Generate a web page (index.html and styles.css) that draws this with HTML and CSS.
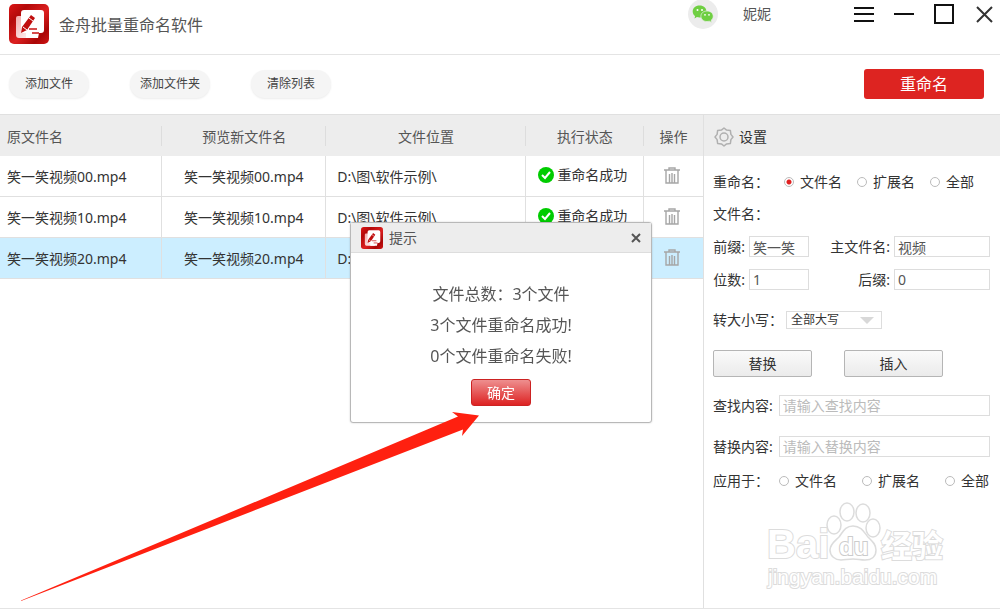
FILE: index.html
```html
<!DOCTYPE html>
<html lang="zh-Hans">
<head>
  <meta charset="UTF-8" />
  <meta name="viewport" content="width=device-width,initial-scale=1" />
  <title>金舟批量重命名软件</title>
  <link rel="stylesheet" href="styles.css">
</head>
<body>

  <!-- 共用图标 -->
  <svg class="sprite" width="0" height="0" aria-hidden="true">
    <defs>
      <linearGradient id="logoRed" x1="0" y1="0" x2="1" y2="1">
        <stop offset="0" stop-color="#dc1616"/>
        <stop offset=".25" stop-color="#b40a0a"/>
        <stop offset=".55" stop-color="#dc2020"/>
        <stop offset=".8" stop-color="#a90606"/>
        <stop offset="1" stop-color="#d01414"/>
      </linearGradient>
      <linearGradient id="paper" x1="0" y1="0" x2="1" y2="1">
        <stop offset="0" stop-color="#f3a9a9"/>
        <stop offset="1" stop-color="#fff"/>
      </linearGradient>
    </defs>
    <symbol id="logo" viewBox="0 0 40 40">
      <rect width="40" height="40" rx="5" fill="url(#logoRed)"/>
      <path d="M9 12h16v22H10a3 3 0 0 1-3-3V14a2 2 0 0 1 2-2z" fill="url(#paper)"/>
      <path d="M15 6h17a3 3 0 0 1 3 3v17a3 3 0 0 1-3 3h-2l-1 5H17V29h-5V9a3 3 0 0 1 3-3z" fill="#fff"/>
      <path d="M22 11l4 3-8 12-6 3 1-6z" fill="#c00d0d"/>
      <path d="M20 14l4 3M14 23l4 3" stroke="#fff" stroke-width="1"/>
      <path d="M20 25h8M23 29h7" stroke="#c91212" stroke-width="1.3"/>
    </symbol>
    <symbol id="ok" viewBox="0 0 16 16">
      <circle cx="8" cy="8" r="8" fill="#0c0"/>
      <path d="M4 8l3 3 5-6" fill="none" stroke="#fff" stroke-width="2"/>
    </symbol>
    <symbol id="trash" viewBox="0 0 16 17">
      <path d="M0 3h16M5 3V1h6v2M2 3v13h12V3M5.500 7v9M8 6v10M10.500 7v9" fill="none" stroke="#a6a6a6" stroke-width="1.400"/>
    </symbol>
  </svg>

  <div class="window">
    <header class="titlebar">
      <svg class="logo"><use href="#logo"/></svg>
      <h1>金舟批量重命名软件</h1>
      <div class="account">
        <svg class="avatar" viewBox="0 0 30 30">
          <circle cx="15" cy="15" r="15" fill="#ececec"/>
          <path d="M11.500 6.500c4.200 0 7 2.600 7 6s-2.800 6-7 6c-1 0-1.800-.1-2.600-.4L6.500 19.500l.6-2.400C5.500 16 4.700 14.400 4.700 12.500c0-3.400 2.800-6 6.800-6z" fill="#6fcf42"/>
          <path d="M19 12c3.600 0 6.200 2.300 6.200 5.200 0 1.600-.8 3-2 4l.4 2.200-2.200-1.200c-.8.200-1.600.3-2.400.3-3.500 0-6.100-2.300-6.100-5.300S15.500 12 19 12z" fill="#6fcf42" stroke="#ececec" stroke-width=".7"/>
          <g fill="#fff"><circle cx="9.500" cy="11" r="1"/><circle cx="14" cy="11" r="1"/><circle cx="17" cy="15.800" r=".9"/><circle cx="21" cy="15.800" r=".9"/></g>
        </svg>
        <span>妮妮</span>
      </div>
      <div class="win-buttons">
        <button type="button" aria-label="菜单"><svg viewBox="0 0 22 22"><path d="M1 5h20M1 11h20M1 18h20" stroke="#111" stroke-width="2"/></svg></button>
        <button type="button" aria-label="最小化"><svg viewBox="0 0 22 22"><path d="M1 11h20" stroke="#111" stroke-width="2"/></svg></button>
        <button type="button" aria-label="最大化"><svg viewBox="0 0 22 22"><rect x="2" y="2" width="18" height="18" fill="none" stroke="#111" stroke-width="2"/></svg></button>
        <button type="button" aria-label="关闭"><svg viewBox="0 0 22 22"><path d="M4 4l15 15M19 4L4 19" stroke="#333" stroke-width="2"/></svg></button>
      </div>
    </header>

    <div class="toolbar">
      <button type="button" class="pill">添加文件</button>
      <button type="button" class="pill">添加文件夹</button>
      <button type="button" class="pill">清除列表</button>
      <button type="button" class="rename">重命名</button>
    </div>

    <div class="content">
      <main class="files">
        <table>
          <colgroup>
            <col class="c-name"><col class="c-new"><col class="c-path"><col class="c-state"><col class="c-op">
          </colgroup>
          <thead>
            <tr><th>原文件名</th><th>预览新文件名</th><th>文件位置</th><th>执行状态</th><th>操作</th></tr>
          </thead>
          <tbody>
            <tr>
              <td>笑一笑视频00.mp4</td><td>笑一笑视频00.mp4</td><td>D:\图\软件示例\</td>
              <td><span class="state"><svg><use href="#ok"/></svg>重命名成功</span></td>
              <td><button type="button" class="del" aria-label="删除"><svg><use href="#trash"/></svg></button></td>
            </tr>
            <tr>
              <td>笑一笑视频10.mp4</td><td>笑一笑视频10.mp4</td><td>D:\图\软件示例\</td>
              <td><span class="state"><svg><use href="#ok"/></svg>重命名成功</span></td>
              <td><button type="button" class="del" aria-label="删除"><svg><use href="#trash"/></svg></button></td>
            </tr>
            <tr class="selected">
              <td>笑一笑视频20.mp4</td><td>笑一笑视频20.mp4</td><td>D:\图\软件示例\</td>
              <td><span class="state"><svg><use href="#ok"/></svg>重命名成功</span></td>
              <td><button type="button" class="del" aria-label="删除"><svg><use href="#trash"/></svg></button></td>
            </tr>
          </tbody>
        </table>
      </main>

      <aside class="settings">
        <h2>
          <svg viewBox="0 0 20 20" fill="none" stroke="#b0b0b0" stroke-width="1.500">
            <path d="M10 1l2.600 2.100 3.800.5.500 3.800L19 10l-2.100 2.600-.5 3.800-3.800.5L10 19l-2.600-2.100-3.800-.5-.5-3.800L1 10l2.100-2.600.5-3.800 3.800-.5z" stroke-linejoin="round"/>
            <circle cx="10" cy="10" r="4"/>
          </svg>
          设置
        </h2>
        <form>
          <div class="row radios" role="radiogroup" aria-labelledby="renameLabel">
            <span id="renameLabel">重命名：</span>
            <label><input type="radio" name="target" checked>文件名</label>
            <label><input type="radio" name="target">扩展名</label>
            <label><input type="radio" name="target">全部</label>
          </div>
          <div class="row">文件名：</div>
          <div class="row fields">
            <label for="prefix">前缀:</label>
            <input type="text" id="prefix" value="笑一笑">
            <label for="mainName">主文件名:</label>
            <input type="text" id="mainName" value="视频">
          </div>
          <div class="row fields">
            <label for="digits">位数:</label>
            <input type="text" id="digits" value="1">
            <label for="suffix">后缀:</label>
            <input type="text" id="suffix" value="0">
          </div>
          <div class="row case">
            <label for="letterCase">转大小写：</label>
            <span class="select">
              <select id="letterCase"><option>全部大写</option><option>全部小写</option></select>
            </span>
          </div>
          <div class="row actions">
            <button type="button">替换</button>
            <button type="button">插入</button>
          </div>
          <div class="row search">
            <label for="find">查找内容:</label>
            <input type="text" id="find" placeholder="请输入查找内容">
          </div>
          <div class="row search">
            <label for="replace">替换内容:</label>
            <input type="text" id="replace" placeholder="请输入替换内容">
          </div>
          <div class="row radios wide" role="radiogroup" aria-labelledby="applyLabel">
            <span id="applyLabel">应用于：</span>
            <label><input type="radio" name="apply">文件名</label>
            <label><input type="radio" name="apply">扩展名</label>
            <label><input type="radio" name="apply">全部</label>
          </div>
        </form>
        <svg class="watermark" viewBox="0 0 184 92">
          <g fill="#fff" stroke="#dcdcdc" stroke-width="1.500">
            <text class="wm-latin" x="2" y="57">Bai</text>
            <ellipse cx="69" cy="24" rx="7" ry="9"/>
            <ellipse cx="82" cy="11" rx="7" ry="9"/>
            <ellipse cx="98" cy="12" rx="7" ry="9"/>
            <ellipse cx="108" cy="27" rx="7" ry="9"/>
            <path d="M88 25c8 0 11 6 15 11 4 4 8 7 8 13 0 7-5 10-11 10-5 0-7-1-12-1s-8 1-12 1c-6 0-11-4-11-10 0-6 5-9 9-13 4-5 6-11 14-11z"/>
            <text class="wm-du" x="74" y="54">du</text>
            <text class="wm-cjk" x="116" y="56">经验</text>
          </g>
          <text class="wm-url" x="3" y="83">jingyan.baidu.com</text>
        </svg>
      </aside>
    </div>
  </div>

  <div class="overlay">
    <section class="dialog" role="dialog" aria-labelledby="dialogTitle">
      <div class="dialog-head">
        <svg class="dialog-logo"><use href="#logo"/></svg>
        <h3 id="dialogTitle">提示</h3>
        <button type="button" class="dialog-close" aria-label="关闭"><svg viewBox="0 0 10 10"><path d="M1 1l8 8M9 1L1 9" stroke="#555" stroke-width="2"/></svg></button>
      </div>
      <div class="dialog-body">
        <p>文件总数：3个文件</p>
        <p>3个文件重命名成功!</p>
        <p>0个文件重命名失败!</p>
        <button type="button" class="confirm">确定</button>
      </div>
    </section>
  </div>

  <svg class="arrow" viewBox="0 0 1000 609" aria-hidden="true">
    <path d="M21 600.500L458 416.500 452 412 479 415.500 462 436 463 429.500 21 601z" fill="#ff2010"/>
  </svg>

</body>
</html>
```

FILE: styles.css
```css
* {
  box-sizing: border-box;
}
body {
  margin: 0;
  font-family: "Noto Sans", "Noto Sans CJK SC", sans-serif;
  font-size: 14px;
  line-height: 20px;
  color: #333;
  background: #fff;
}
h1, h2, h3, p {
  margin: 0;
  font-weight: 400;
}
button, input, select {
  font: inherit;
  color: inherit;
}
button {
  padding: 0;
  border: none;
  background: none;
  cursor: pointer;
}
svg {
  display: block;
}
.sprite {
  position: absolute;
}
.window {
  display: flex;
  flex-direction: column;
  min-height: 100vh;
  border-bottom: 1px solid #e4e4e4;
}

/* 标题栏 */
.titlebar {
  display: flex;
  align-items: flex-start;
  height: 55px;
  padding: 0 5px 0 9px;
  border-bottom: 1px solid #e4e4e4;
}
.logo {
  width: 40px;
  height: 40px;
  margin-top: 4px;
}
.titlebar h1 {
  flex: 1;
  margin: 15px 0 0 10px;
  font-size: 16px;
  color: #555;
}
.account {
  display: flex;
  align-items: center;
  gap: 25px;
  height: 28px;
  margin-right: 82px;
  color: #555;
}
.avatar {
  width: 30px;
  height: 30px;
}
.win-buttons {
  display: flex;
  gap: 18px;
  margin-top: 3px;
}
.win-buttons svg {
  width: 22px;
  height: 22px;
}

/* 工具栏 */
.toolbar {
  display: flex;
  align-items: center;
  gap: 41px;
  height: 59px;
  padding: 0 16px 2px 9px;
}
.pill {
  width: 80px;
  height: 28px;
  border-radius: 14px;
  background: #f5f5f5;
  box-shadow: 0 1px 2px rgba(0,0,0,0.08);
  font-size: 12px;
  color: #444;
}
.rename {
  width: 120px;
  height: 30px;
  margin-left: auto;
  border-radius: 3px;
  background: #dd2421;
  color: #fff;
  font-size: 16px;
}

/* 文件列表 */
.content {
  display: flex;
  flex: 1;
}
.files {
  flex: 1;
  min-width: 0;
}
table {
  width: 100%;
  table-layout: fixed;
  border-collapse: separate;
  border-spacing: 0;
}
.c-name { width: 23.100%; }
.c-new { width: 23.300%; }
.c-path { width: 28.400%; }
.c-state { width: 16.800%; }
.c-op { width: 8.400%; }
th {
  height: 42px;
  padding: 2px 0 0;
  border-top: 1px solid #e0e0e0;
  background: #ededed linear-gradient(#ddd, #ddd) right center / 1px 20px no-repeat;
  font-weight: 400;
  color: #555;
}
th:first-child {
  padding-left: 7px;
  text-align: left;
}
th:last-child {
  background-image: none;
}
td {
  height: 41px;
  padding: 2px 0 0;
  border-right: 1px solid #e0e0e0;
  border-bottom: 1px solid #e0e0e0;
  text-align: center;
  white-space: nowrap;
  overflow: hidden;
}
td:first-child {
  padding-left: 7px;
  text-align: left;
}
td:nth-child(3) {
  padding-left: 11px;
  text-align: left;
}
td:nth-child(4),
td:last-child {
  padding: 0 3px 2px 0;
}
td:last-child {
  border-right: none;
}
.selected td {
  background: #cef;
}
.state {
  display: flex;
  align-items: center;
  justify-content: center;
  gap: 3px;
}
.state svg {
  width: 16px;
  height: 16px;
}
.del {
  display: block;
  margin: 0 auto;
}
.del svg {
  width: 16px;
  height: 17px;
}

/* 设置面板 */
.settings {
  width: 297px;
  border-left: 1px solid #e0e0e0;
}
.settings h2 {
  display: flex;
  align-items: center;
  gap: 5px;
  height: 42px;
  padding: 2px 10px 0;
  border-top: 1px solid #e0e0e0;
  background: #ededed;
  font-size: 14px;
}
.settings h2 svg {
  width: 20px;
  height: 20px;
}
form {
  display: flex;
  flex-direction: column;
  gap: 12px;
  padding: 16px 10px 0 9px;
}
.row {
  display: flex;
  align-items: center;
  min-height: 20px;
}
.case,
.actions,
.search + .search {
  margin-top: 8px;
}
.search {
  margin-top: 6px;
}
.radios {
  gap: 15px;
}
.radios.wide {
  gap: 25px;
  margin-top: 2px;
}
.radios.wide span {
  margin-right: -15px;
}
.radios label {
  display: flex;
  align-items: center;
  gap: 6px;
}
input[type=radio] {
  appearance: none;
  width: 10px;
  height: 10px;
  margin: 0;
  border: 1px solid #bbb;
  border-radius: 50%;
  background: #fff;
}
input[type=radio]:checked {
  background: radial-gradient(circle, #e02020 0 2px, #fff 3px);
}
.fields {
  display: grid;
  grid-template-columns: 32px 60px 1fr 96px;
  gap: 4px;
}
.fields label {
  text-align: right;
}
input[type=text] {
  min-width: 0;
  height: 21px;
  padding: 0 3px;
  border: 1px solid #ddd;
  background: #fff;
  color: #555;
}
input::placeholder {
  color: #bbb;
}
.case {
  gap: 3px;
}
.select {
  position: relative;
}
.select::after {
  content: "";
  position: absolute;
  top: 6px;
  right: 8px;
  border: 7px solid transparent;
  border-top-color: #d8d8d8;
  border-bottom: none;
  pointer-events: none;
}
select {
  display: block;
  appearance: none;
  width: 96px;
  height: 18px;
  padding: 0 4px;
  border: 1px solid #ddd;
  border-radius: 0;
  background: #fff;
  font-size: 12px;
  line-height: 16px;
}
.actions {
  gap: 32px;
}
.actions button {
  width: 99px;
  height: 27px;
  border: 1px solid #b5b5b5;
  border-radius: 2px;
  background: linear-gradient(#fafafa, #ebebeb);
}
.search {
  gap: 6px;
}
.search input {
  flex: 1;
}
.watermark {
  width: 184px;
  height: 92px;
  margin: 10px 0 0 61px;
}
.watermark text {
  paint-order: stroke;
  stroke-width: 2px;
}
.wm-latin {
  font: 700 40px "Liberation Sans", sans-serif;
}
.wm-du {
  font: 700 24px "Liberation Sans", sans-serif;
  stroke: #ccc;
}
.wm-cjk {
  font: 700 31px "Noto Sans CJK SC", sans-serif;
}
.wm-url {
  font: 400 21px "Liberation Sans", sans-serif;
  fill: #fff;
  stroke: #dcdcdc;
}

/* 提示框 */
.overlay {
  position: fixed;
  inset: 0;
  display: flex;
  align-items: center;
  justify-content: center;
  padding: 36px 0 0 2px;
}
.dialog {
  width: 302px;
  border: 1px solid #b8b8b8;
  border-radius: 3px;
  background: #fff;
  box-shadow: 0 0 2px rgba(0,0,0,0.2);
}
.dialog-head {
  display: flex;
  align-items: center;
  gap: 6px;
  height: 30px;
  padding: 0 10px;
  border-bottom: 1px solid #ddd;
  background: #ededed;
  color: #555;
}
.dialog-logo {
  width: 22px;
  height: 22px;
}
.dialog-head h3 {
  flex: 1;
  font-size: 14px;
}
.dialog-close svg {
  width: 10px;
  height: 10px;
}
.dialog-body {
  padding: 26px 0 14px;
  text-align: center;
  font-size: 16px;
  line-height: 31px;
  color: #555;
}
.confirm {
  width: 60px;
  height: 27px;
  margin-top: 7px;
  border: 1px solid #c22;
  border-radius: 3px;
  background: linear-gradient(#ee8f8f, #dd2222);
  color: #fff;
  font-size: 14px;
  line-height: 20px;
}
.arrow {
  position: fixed;
  inset: 0;
  width: 100%;
  height: 100%;
  pointer-events: none;
}
```
